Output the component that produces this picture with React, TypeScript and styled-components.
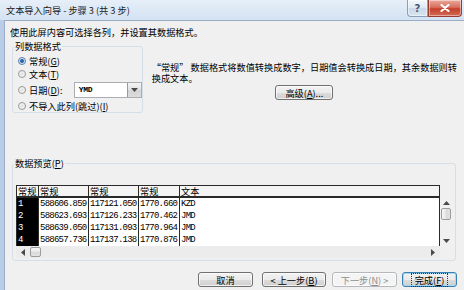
import React from 'react';
import styled, { createGlobalStyle } from 'styled-components';

const GlobalStyle = createGlobalStyle`
  html, body {
    margin: 0;
    padding: 0;
    background: #f0f0f0;
  }
  body {
    font-family: "Noto Sans CJK SC", "Noto Sans", sans-serif;
    font-size: 9.2px;
    color: #000;
  }
  * {
    box-sizing: border-box;
  }
`;

const Window = styled.div`
  width: 464px;
  height: 290px;
  display: flex;
  flex-direction: column;
  overflow: hidden;
  background: linear-gradient(90deg, #b9cde6, #cfdff1);
`;

const TitleBar = styled.div`
  height: 20px;
  flex-shrink: 0;
  display: flex;
  align-items: flex-start;
  background: linear-gradient(#e6eff9, #d4e2f2);
`;

const Title = styled.div`
  flex: 1;
  padding-left: 6px;
  line-height: 21px;
  color: #1a1a1a;
  white-space: nowrap;
`;

const CaptionButtons = styled.div`
  display: flex;
  margin-right: 2px;
`;

const CaptionButton = styled.div<{ $close?: boolean; $w: number }>`
  width: ${(p) => p.$w}px;
  height: 17px;
  display: flex;
  align-items: center;
  justify-content: center;
  border: 1px solid ${(p) => (p.$close ? '#9a3a30' : '#8b9fb8')};
  border-top: none;
  border-radius: ${(p) => (p.$close ? '0 0 4px 0' : '0 0 0 4px')};
  background: ${(p) =>
    p.$close
      ? 'linear-gradient(#e9a99c, #d9705f 45%, #c3402d 55%, #d26a52)'
      : 'linear-gradient(#f3f7fc, #dfe8f3 50%, #cad8e9 51%, #d9e5f2)'};
  box-shadow: inset 0 0 0 1px rgba(255, 255, 255, 0.45);
  color: #46566c;
  font-family: "DejaVu Sans", sans-serif;
  font-size: 10px;
  font-weight: bold;
`;

const Content = styled.div`
  flex: 1;
  margin-left: 4px;
  display: flex;
  flex-direction: column;
  padding: 0 7px 0 5px;
  background: #f0f0f0;
  border-top: 1px solid #9aadc6;
  border-left: 1px solid #9aadc6;
`;

const Intro = styled.div`
  margin-top: 5px;
  line-height: 12px;
  white-space: nowrap;
`;

const TopRow = styled.div`
  display: flex;
  margin-top: 2px;
`;

const Group = styled.fieldset<{ $w: number }>`
  width: ${(p) => p.$w}px;
  margin: 0 0 0 2px;
  padding: 0;
  border: 1px solid #d5dfe5;
  border-radius: 3px;
  min-width: 0;
`;

const Legend = styled.legend`
  margin-left: 1px;
  padding: 0 1px;
  line-height: 12px;
  white-space: nowrap;
`;

const RadioList = styled.div`
  display: flex;
  flex-direction: column;
  gap: 1px;
  padding: 3px 0 0 5px;
`;

const RadioRow = styled.div<{ $h?: number; $gap?: number }>`
  height: ${(p) => p.$h ?? 12}px;
  margin-top: ${(p) => p.$gap ?? 0}px;
  display: flex;
  align-items: center;
  white-space: nowrap;
`;

const RadioCircle = styled.span<{ $checked?: boolean }>`
  width: 8px;
  height: 8px;
  flex-shrink: 0;
  margin-right: 3px;
  border-radius: 50%;
  border: 1px solid ${(p) => (p.$checked ? '#5a7faa' : '#959595')};
  background: ${(p) =>
    p.$checked
      ? 'radial-gradient(circle, #1f4f8c 0, #3c76b8 1.6px, #cfe1f3 2.4px, #f6f8fb 100%)'
      : 'radial-gradient(circle, #e0e0e0 0, #f2f2f2 60%, #fbfbfb 100%)'};
`;

const RadioLabel = styled.span<{ $w?: number }>`
  display: inline-block;
  width: ${(p) => (p.$w ? `${p.$w}px` : 'auto')};
`;

const Key = styled.u`
  text-underline-offset: 1px;
`;

const Combo = styled.div`
  width: 70px;
  height: 16px;
  display: flex;
  align-items: stretch;
  border: 1px solid #abadb3;
  background: #fff;
`;

const ComboText = styled.div`
  flex: 1;
  padding-left: 4px;
  line-height: 14px;
  font-family: "Liberation Mono", monospace;
  font-weight: bold;
  font-size: 8px;
  letter-spacing: -0.3px;
`;

const ComboArrow = styled.div`
  width: 14px;
  display: flex;
  align-items: center;
  justify-content: center;
  border-left: 1px solid #9a9a9a;
  background: linear-gradient(#f4f4f4, #e2e2e2 50%, #d4d4d4 51%, #dcdcdc);
`;

const DescColumn = styled.div`
  flex: 1;
  margin-left: 9px;
  margin-top: 22px;
  display: flex;
  flex-direction: column;
`;

const DescText = styled.div`
  line-height: 11px;
  white-space: nowrap;
`;

const Button = styled.div<{ $w: number; $disabled?: boolean; $default?: boolean }>`
  width: ${(p) => p.$w}px;
  height: 15px;
  display: flex;
  align-items: center;
  justify-content: center;
  white-space: nowrap;
  border-radius: 3px;
  border: 1px solid
    ${(p) => (p.$disabled ? '#b4b8bb' : p.$default ? '#3c7fb1' : '#707070')};
  background: ${(p) =>
    p.$disabled
      ? '#f4f4f4'
      : 'linear-gradient(#f2f2f2, #ebebeb 50%, #dddddd 51%, #cfcfcf)'};
  box-shadow: ${(p) =>
    p.$default ? 'inset 0 0 0 1px #9fdcf7' : 'inset 0 0 0 1px rgba(255,255,255,0.7)'};
  color: ${(p) => (p.$disabled ? '#8d8d8d' : '#000')};
  line-height: 12px;
`;

const FocusRing = styled.span`
  padding: 0 3px;
  outline: 1px dotted #333;
  outline-offset: 0;
`;

const AdvancedButton = styled(Button)`
  align-self: center;
  margin-top: 1px;
`;

const PreviewGroup = styled(Group)`
  margin-top: 44px;
  height: 104px;
`;

const PreviewInner = styled.div`
  padding: 16px 0 0 3px;
`;

const GridRow = styled.div`
  display: flex;
`;

const Table = styled.div`
  width: 424px;
  display: grid;
  grid-template-columns: 22px 50px 50px 41px 1fr;
  border-left: 1px solid #2a2a2a;
`;

const HeadCell = styled.div`
  height: 13px;
  padding-left: 1px;
  line-height: 10px;
  background: #f4f4f4;
  border-top: 1px solid #2a2a2a;
  border-bottom: 2px solid #2a2a2a;
  border-right: 1px solid #2a2a2a;
  white-space: nowrap;
  overflow: hidden;
`;

const Cell = styled.div<{ $index?: boolean }>`
  height: 12px;
  padding-left: 1px;
  line-height: 12px;
  background: ${(p) => (p.$index ? '#000' : '#fff')};
  color: ${(p) => (p.$index ? '#fff' : '#000')};
  border-right: 1px solid #2a2a2a;
  font-family: "Liberation Mono", monospace;
  font-size: 9px;
  letter-spacing: -0.75px;
  white-space: nowrap;
  overflow: hidden;
`;

const VScroll = styled.div`
  width: 12px;
  height: 48px;
  margin-top: 13px;
  display: flex;
  flex-direction: column;
  align-items: center;
  background: #f0f0f0;
`;

const ArrowBox = styled.div<{ $size: number }>`
  width: ${(p) => p.$size}px;
  height: ${(p) => p.$size}px;
  display: flex;
  align-items: center;
  justify-content: center;
`;

const Thumb = styled.div<{ $horizontal?: boolean }>`
  width: ${(p) => (p.$horizontal ? 11 : 10)}px;
  height: ${(p) => (p.$horizontal ? 10 : 12)}px;
  border: 1px solid #9b9b9b;
  border-radius: 2px;
  background: ${(p) =>
    p.$horizontal
      ? 'linear-gradient(#f6f6f6, #e6e6e6 50%, #d9d9d9 51%, #e2e2e2)'
      : 'linear-gradient(90deg, #f6f6f6, #e6e6e6 50%, #d9d9d9 51%, #e2e2e2)'};
`;

const VSpacer = styled.div`
  flex: 1;
`;

const HScroll = styled.div`
  width: 424px;
  height: 12px;
  display: flex;
  align-items: center;
  background: #ececec;
`;

const ButtonRow = styled.div`
  display: flex;
  justify-content: flex-end;
  margin-top: 11px;
`;

const ButtonGap = styled.div<{ $w: number }>`
  width: ${(p) => p.$w}px;
`;

const Tri = ({ dir }: { dir: 'up' | 'down' | 'left' | 'right' }): JSX.Element => {
  const pts = {
    up: '0,4 3.5,0 7,4',
    down: '0,0 3.5,4 7,0',
    left: '4,0 0,3.5 4,7',
    right: '0,0 4,3.5 0,7',
  }[dir];
  const vertical = dir === 'up' || dir === 'down';
  return (
    <svg width={vertical ? 7 : 4} height={vertical ? 4 : 7} viewBox={vertical ? '0 0 7 4' : '0 0 4 7'}>
      <polygon points={pts} fill="#4a4a4a" />
    </svg>
  );
};

const rows = [
  ['1', '588606.859', '117121.050', '1770.660', 'KZD'],
  ['2', '588623.693', '117126.233', '1770.462', 'JMD'],
  ['3', '588639.050', '117131.093', '1770.964', 'JMD'],
  ['4', '588657.736', '117137.138', '1770.876', 'JMD'],
];

const headers = ['常规', '常规', '常规', '常规', '文本'];

function App(): JSX.Element {
  return (
    <>
      <GlobalStyle />
      <Window>
        <TitleBar>
          <Title>文本导入向导 - 步骤 3 (共 3 步)</Title>
          <CaptionButtons>
            <CaptionButton $w={21}>?</CaptionButton>
            <CaptionButton $w={34} $close>
              <svg width="10" height="8" viewBox="0 0 10 8">
                <path d="M1.5 1 L8.5 7 M8.5 1 L1.5 7" stroke="#fff" strokeWidth="2.2" strokeLinecap="round" />
              </svg>
            </CaptionButton>
          </CaptionButtons>
        </TitleBar>

        <Content>
          <Intro>使用此屏内容可选择各列，并设置其数据格式。</Intro>

          <TopRow>
            <Group $w={136}>
              <Legend>列数据格式</Legend>
              <RadioList>
                <RadioRow>
                  <RadioCircle $checked />
                  <RadioLabel>
                    常规(<Key>G</Key>)
                  </RadioLabel>
                </RadioRow>
                <RadioRow>
                  <RadioCircle />
                  <RadioLabel>
                    文本(<Key>T</Key>)
                  </RadioLabel>
                </RadioRow>
                <RadioRow $h={16} $gap={1}>
                  <RadioCircle />
                  <RadioLabel $w={46}>
                    日期(<Key>D</Key>):
                  </RadioLabel>
                  <Combo>
                    <ComboText>YMD</ComboText>
                    <ComboArrow>
                      <Tri dir="down" />
                    </ComboArrow>
                  </Combo>
                </RadioRow>
                <RadioRow $gap={1}>
                  <RadioCircle />
                  <RadioLabel>
                    不导入此列(跳过)(<Key>I</Key>)
                  </RadioLabel>
                </RadioRow>
              </RadioList>
            </Group>

            <DescColumn>
              <DescText>
                “常规” 数据格式将数值转换成数字，日期值会转换成日期，其余数据则转
                <br />
                换成文本。
              </DescText>
              <AdvancedButton $w={58}>
                高级(<Key>A</Key>)...
              </AdvancedButton>
            </DescColumn>
          </TopRow>

          <PreviewGroup $w={444}>
            <Legend>
              数据预览(<Key>P</Key>)
            </Legend>
            <PreviewInner>
              <GridRow>
                <Table>
                  {headers.map((h, i) => (
                    <HeadCell key={i}>{h}</HeadCell>
                  ))}
                  {rows.map((r) =>
                    r.map((v, i) => (
                      <Cell key={r[0] + i} $index={i === 0}>
                        {v}
                      </Cell>
                    ))
                  )}
                </Table>
                <VScroll>
                  <ArrowBox $size={10}>
                    <Tri dir="up" />
                  </ArrowBox>
                  <Thumb />
                  <VSpacer />
                  <ArrowBox $size={10}>
                    <Tri dir="down" />
                  </ArrowBox>
                </VScroll>
              </GridRow>
              <HScroll>
                <ArrowBox $size={14}>
                  <Tri dir="left" />
                </ArrowBox>
                <Thumb $horizontal />
                <VSpacer />
                <ArrowBox $size={14}>
                  <Tri dir="right" />
                </ArrowBox>
              </HScroll>
            </PreviewInner>
          </PreviewGroup>

          <ButtonRow>
            <Button $w={55}>取消</Button>
            <ButtonGap $w={9} />
            <Button $w={64}>
              &lt; 上一步(<Key>B</Key>)
            </Button>
            <ButtonGap $w={6} />
            <Button $w={65} $disabled>
              下一步(<Key>N</Key>) &gt;
            </Button>
            <ButtonGap $w={5} />
            <Button $w={55} $default>
              <FocusRing>
                完成(<Key>F</Key>)
              </FocusRing>
            </Button>
          </ButtonRow>
        </Content>
      </Window>
    </>
  );
}

export default App;
